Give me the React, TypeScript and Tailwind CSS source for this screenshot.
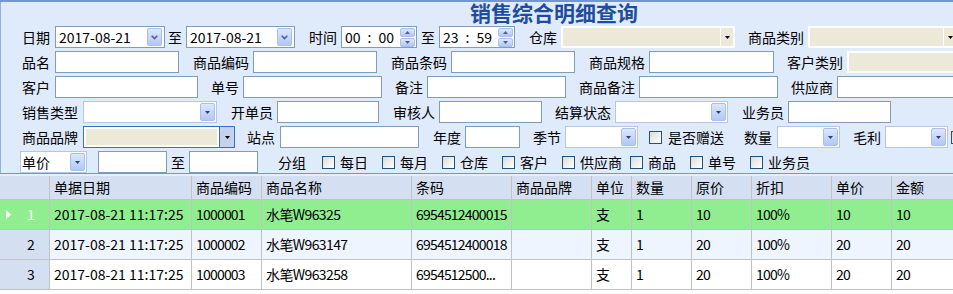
import type { ReactNode } from "react";

function Label({ children, className = "" }: { children: ReactNode; className?: string }) {
  return <span className={`shrink-0 whitespace-nowrap leading-[22px] ${className}`}>{children}</span>;
}

function TextBox({ className = "" }: { className?: string }) {
  return <div className={`h-[22px] shrink-0 border border-[#7f9db9] bg-white ${className}`} />;
}

function Tri({ color = "#000", up = false }: { color?: string; up?: boolean }) {
  return (
    <svg width="5" height="3" viewBox="0 0 5 3" className="block">
      <path d={up ? "M0 3H5L2.5 0Z" : "M0 0H5L2.5 3Z"} fill={color} />
    </svg>
  );
}

const blueBtn =
  "flex items-center justify-center rounded-[2px] border border-[#a9bfe9] bg-linear-to-b from-[#dde7fc] to-[#b0c8f5]";

function DateBox({ value, className = "" }: { value: string; className?: string }) {
  return (
    <div className={`flex h-[22px] shrink-0 items-center border border-[#7f9db9] bg-white pl-[3px] pr-[2px] ${className}`}>
      <span className="flex-1 leading-none">{value}</span>
      <div className={`h-[18px] w-[15px] ${blueBtn}`}>
        <svg width="7" height="5" viewBox="0 0 7 5" className="block">
          <path d="M0.7 0.8L3.5 3.6L6.3 0.8" stroke="#4d6185" strokeWidth="1.6" fill="none" />
        </svg>
      </div>
    </div>
  );
}

function TimeBox({ h, m, className = "" }: { h: string; m: string; className?: string }) {
  return (
    <div className={`flex h-[22px] shrink-0 items-center border border-[#7f9db9] bg-white pl-[3px] pr-[1px] ${className}`}>
      <span className="flex flex-1 items-center leading-none">
        <span>{h}</span>
        <span className="mx-[7px]">:</span>
        <span>{m}</span>
      </span>
      <div className="flex h-[19px] w-[15px] flex-col gap-[1px]">
        <div className={`flex-1 ${blueBtn}`}>
          <Tri color="#4d6185" up />
        </div>
        <div className={`flex-1 ${blueBtn}`}>
          <Tri color="#4d6185" />
        </div>
      </div>
    </div>
  );
}

/** Disabled-looking combo: white frame, beige field and beige arrow button. */
function BeigeCombo({ className = "" }: { className?: string }) {
  return (
    <div className={`flex h-[22px] shrink-0 gap-[1px] bg-white p-[2px] ${className}`}>
      <div className="flex-1 bg-[#ece9d8]" />
      <div className="flex w-[12px] items-center justify-center bg-[#ece9d8]">
        <Tri />
      </div>
    </div>
  );
}

function BlueCombo({ text, className = "" }: { text?: string; className?: string }) {
  return (
    <div className={`flex h-[22px] shrink-0 items-center border border-[#b4c7e4] bg-white pl-[1px] pr-[1px] ${className}`}>
      <span className="flex-1 leading-none">{text}</span>
      <div className={`h-[18px] w-[15px] ${blueBtn}`}>
        <Tri color="#2c3f6e" />
      </div>
    </div>
  );
}

function FocusCombo({ className = "" }: { className?: string }) {
  return (
    <div className={`flex h-[22px] shrink-0 border border-[#3c6ec8] bg-white ${className}`}>
      <div className="m-[2px] flex-1 bg-[#ece9d8]" />
      <div className="flex w-[15px] items-center justify-center border-l border-[#3c6ec8] bg-[#c4d3ec]">
        <Tri />
      </div>
    </div>
  );
}

function Check({ className = "" }: { className?: string }) {
  return (
    <div
      className={`h-[13px] w-[13px] shrink-0 border border-[#1c5180] bg-linear-to-br from-[#dcdcd5] to-white ${className}`}
    />
  );
}

// narrow: squeeze the Latin digits toward the 7px-per-char look of the original font
const cols = [
  { title: "单据日期", w: "w-[142px]", narrow: "" },
  { title: "商品编码", w: "w-[70px]", narrow: "tracking-[-0.8px]" },
  { title: "商品名称", w: "w-[150px]", narrow: "tracking-[-0.6px]" },
  { title: "条码", w: "w-[100px]", narrow: "tracking-[-0.8px]" },
  { title: "商品品牌", w: "w-[80px]", narrow: "" },
  { title: "单位", w: "w-[40px]", narrow: "" },
  { title: "数量", w: "w-[60px]", narrow: "" },
  { title: "原价", w: "w-[60px]", narrow: "tracking-[-0.8px]" },
  { title: "折扣", w: "w-[80px]", narrow: "tracking-[-0.8px]" },
  { title: "单价", w: "w-[60px]", narrow: "tracking-[-0.8px]" },
  { title: "金额", w: "w-[80px]", narrow: "tracking-[-0.8px]" },
];

const rows = [
  ["2017-08-21 11:17:25", "1000001", "水笔W96325", "6954512400015", "", "支", "1", "10", "100%", "10", "10"],
  ["2017-08-21 11:17:25", "1000002", "水笔W963147", "6954512400018", "", "支", "1", "20", "100%", "20", "20"],
  ["2017-08-21 11:17:25", "1000003", "水笔W963258", "6954512500...", "", "支", "1", "20", "100%", "20", "20"],
];

const rowBg = ["bg-[#90ee90]", "bg-[#eef5fe]", "bg-white"];

export default function App() {
  return (
    <div className="h-[294px] w-[953px] overflow-hidden bg-white font-['Noto_Sans_CJK_SC',sans-serif] text-[14px] text-black">
      {/* Query form */}
      <div className="h-[174px] overflow-hidden border-t-2 border-b border-[#7396d0] bg-[#dfeafb] shadow-[inset_1px_0_0_#8fb0e0]">
        <div className="h-[24px] whitespace-nowrap pl-[470px] text-[21px] font-bold leading-[21px] text-[#1f4d9e]">
          销售综合明细查询
        </div>

        <div className="flex flex-col gap-[3px]">
          <div className="flex h-[22px] items-center">
            <Label className="ml-[22px]">日期</Label>
            <DateBox value="2017-08-21" className="ml-[5px] w-[110px]" />
            <Label className="ml-[3px]">至</Label>
            <DateBox value="2017-08-21" className="ml-[4px] w-[109px]" />
            <Label className="ml-[14px]">时间</Label>
            <TimeBox h="00" m="00" className="ml-[4px] w-[76px]" />
            <Label className="ml-[4px]">至</Label>
            <TimeBox h="23" m="59" className="ml-[4px] w-[76px]" />
            <Label className="ml-[14px]">仓库</Label>
            <BeigeCombo className="ml-[4px] w-[174px]" />
            <Label className="ml-[13px]">商品类别</Label>
            <BeigeCombo className="ml-[4px] w-[150px]" />
          </div>

          <div className="flex h-[22px] items-center">
            <Label className="ml-[22px]">品名</Label>
            <TextBox className="ml-[5px] w-[124px]" />
            <Label className="ml-[14px]">商品编码</Label>
            <TextBox className="ml-[4px] w-[124px]" />
            <Label className="ml-[14px]">商品条码</Label>
            <TextBox className="ml-[4px] w-[124px]" />
            <Label className="ml-[14px]">商品规格</Label>
            <TextBox className="ml-[4px] w-[125px]" />
            <Label className="ml-[13px]">客户类别</Label>
            <BeigeCombo className="ml-[4px] w-[130px]" />
          </div>

          <div className="flex h-[22px] items-center">
            <Label className="ml-[22px]">客户</Label>
            <TextBox className="ml-[5px] w-[143px]" />
            <Label className="ml-[13px]">单号</Label>
            <TextBox className="ml-[4px] w-[139px]" />
            <Label className="ml-[13px]">备注</Label>
            <TextBox className="ml-[4px] w-[139px]" />
            <Label className="ml-[13px]">商品备注</Label>
            <TextBox className="ml-[4px] w-[139px]" />
            <Label className="ml-[13px]">供应商</Label>
            <TextBox className="ml-[4px] w-[140px]" />
          </div>

          <div className="flex h-[22px] items-center">
            <Label className="ml-[22px]">销售类型</Label>
            <BlueCombo className="ml-[5px] w-[134px]" />
            <Label className="ml-[14px]">开单员</Label>
            <TextBox className="ml-[4px] w-[102px]" />
            <Label className="ml-[14px]">审核人</Label>
            <TextBox className="ml-[4px] w-[103px]" />
            <Label className="ml-[13px]">结算状态</Label>
            <BlueCombo className="ml-[4px] w-[113px]" />
            <Label className="ml-[14px]">业务员</Label>
            <TextBox className="ml-[4px] w-[103px]" />
          </div>

          <div className="flex h-[22px] items-center">
            <Label className="ml-[22px]">商品品牌</Label>
            <FocusCombo className="ml-[5px] w-[152px]" />
            <Label className="ml-[12px]">站点</Label>
            <TextBox className="ml-[5px] w-[139px]" />
            <Label className="ml-[14px]">年度</Label>
            <TextBox className="ml-[4px] w-[55px]" />
            <Label className="ml-[13px]">季节</Label>
            <BlueCombo className="ml-[4px] w-[73px]" />
            <Check className="ml-[11px]" />
            <Label className="ml-[6px]">是否赠送</Label>
            <Label className="ml-[20px]">数量</Label>
            <BlueCombo className="ml-[5px] w-[63px]" />
            <Label className="ml-[13px]">毛利</Label>
            <BlueCombo className="ml-[4px] w-[63px]" />
            <Check className="ml-[3px]" />
          </div>

          <div className="flex h-[22px] items-center">
            <BlueCombo text="单价" className="ml-[20px] w-[67px]" />
            <TextBox className="ml-[11px] w-[69px]" />
            <Label className="ml-[4px]">至</Label>
            <TextBox className="ml-[4px] w-[69px]" />
            <Label className="ml-[20px]">分组</Label>
            <Check className="ml-[16px]" />
            <Label className="ml-[5px]">每日</Label>
            <Check className="ml-[14px]" />
            <Label className="ml-[5px]">每月</Label>
            <Check className="ml-[14px]" />
            <Label className="ml-[5px]">仓库</Label>
            <Check className="ml-[14px]" />
            <Label className="ml-[5px]">客户</Label>
            <Check className="ml-[14px]" />
            <Label className="ml-[5px]">供应商</Label>
            <Check className="ml-[8px]" />
            <Label className="ml-[5px]">商品</Label>
            <Check className="ml-[14px]" />
            <Label className="ml-[5px]">单号</Label>
            <Check className="ml-[14px]" />
            <Label className="ml-[5px]">业务员</Label>
          </div>
        </div>
      </div>

      {/* Result grid */}
      <div className="h-[2px] bg-[#e6eef9]" />
      <div className="overflow-hidden">
        <div className="flex h-[24px] border-b border-[#c2c2c2] bg-[#d4e0f2]">
          <div className="w-[50px] shrink-0 border-r border-[#c2c2c2]" />
          {cols.map((c) => (
            <div
              key={c.title}
              className={`${c.w} shrink-0 whitespace-nowrap border-r border-[#c2c2c2] pl-[4px] leading-[23px]`}
            >
              {c.title}
            </div>
          ))}
        </div>

        {rows.map((r, i) => (
          <div key={i} className={`flex h-[30px] border-b border-[#c2c2c2] ${rowBg[i]}`}>
            <div
              className={`flex w-[50px] shrink-0 items-center border-r border-[#c2c2c2] ${
                i === 0 ? "text-white" : "bg-[#d4e0f2]"
              }`}
            >
              <span className="ml-[6px] w-[21px]">
                {i === 0 && (
                  <svg width="5" height="9" viewBox="0 0 5 9" className="block">
                    <path d="M0 0L5 4.5L0 9Z" fill="#fff" />
                  </svg>
                )}
              </span>
              <span>{i + 1}</span>
            </div>
            {cols.map((c, j) => (
              <div
                key={c.title}
                className={`${c.w} ${c.narrow} shrink-0 overflow-hidden whitespace-nowrap border-r border-[#c2c2c2] pl-[4px] leading-[29px]`}
              >
                {r[j]}
              </div>
            ))}
          </div>
        ))}
      </div>
    </div>
  );
}
